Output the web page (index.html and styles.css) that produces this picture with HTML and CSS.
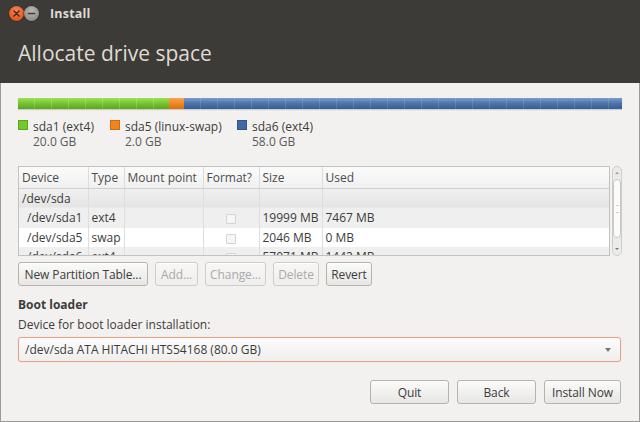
FILE: index.html
```html
<!DOCTYPE html>
<html>
<head>
<meta charset="utf-8">
<link rel="stylesheet" href="styles.css">
</head>
<body>
<div class="window">
  <div class="header">
    <div class="titlebar">
      <span class="wbtn close">
        <svg width="15" height="15" viewBox="0 0 15 15"><path d="M5 5 L10 10 M10 5 L5 10" stroke="#4a2b1c" stroke-width="1.6" stroke-linecap="round"/></svg>
      </span>
      <span class="wbtn mini">
        <svg width="15" height="15" viewBox="0 0 15 15"><path d="M4.5 7.5 H10.5" stroke="#3c3b37" stroke-width="1.6" stroke-linecap="round"/></svg>
      </span>
      <span class="wtitle">Install</span>
    </div>
    <h1 class="heading">Allocate drive space</h1>
  </div>
  <div class="content">
    <div class="pbar">
      <div class="seg green" style="flex-grow:20"></div>
      <div class="seg orange" style="flex-grow:2"></div>
      <div class="seg blue" style="flex-grow:58"></div>
    </div>
    <div class="legend">
      <div class="litem l1">
        <span class="swatch green"></span>
        <div class="ltext"><div>sda1 (ext4)</div><div>20.0 GB</div></div>
      </div>
      <div class="litem l2">
        <span class="swatch orange"></span>
        <div class="ltext"><div>sda5 (linux-swap)</div><div>2.0 GB</div></div>
      </div>
      <div class="litem l3">
        <span class="swatch blue"></span>
        <div class="ltext"><div>sda6 (ext4)</div><div>58.0 GB</div></div>
      </div>
    </div>
    <div class="tablewrap">
      <div class="tablebox">
        <table class="ptable">
          <colgroup>
            <col class="c1"><col class="c2"><col class="c3"><col class="c4"><col class="c5"><col class="c6">
          </colgroup>
          <thead>
            <tr><th>Device</th><th>Type</th><th>Mount point</th><th>Format?</th><th>Size</th><th>Used</th></tr>
          </thead>
          <tbody>
            <tr class="r-disk"><td>/dev/sda</td><td></td><td></td><td></td><td></td><td></td></tr>
            <tr class="r-gray"><td class="ind">/dev/sda1</td><td>ext4</td><td></td><td class="chk"><span class="cb"></span></td><td>19999 MB</td><td>7467 MB</td></tr>
            <tr class="r-white"><td class="ind">/dev/sda5</td><td>swap</td><td></td><td class="chk"><span class="cb"></span></td><td>2046 MB</td><td>0 MB</td></tr>
            <tr class="r-gray"><td class="ind">/dev/sda6</td><td>ext4</td><td></td><td class="chk"><span class="cb"></span></td><td>57071 MB</td><td>1442 MB</td></tr>
          </tbody>
        </table>
      </div>
      <div class="scrollbar">
        <span class="arr up"></span>
        <span class="thumb"><span class="grip"></span></span>
        <span class="arr down"></span>
      </div>
    </div>
    <div class="btnrow">
      <button class="btn b-new">New Partition Table...</button>
      <button class="btn dis b-add">Add...</button>
      <button class="btn dis b-chg">Change...</button>
      <button class="btn dis b-del">Delete</button>
      <button class="btn b-rev">Revert</button>
    </div>
    <div class="bl-title">Boot loader</div>
    <div class="bl-label">Device for boot loader installation:</div>
    <div class="combo">
      <span>/dev/sda ATA HITACHI HTS54168 (80.0 GB)</span>
      <span class="carrow"></span>
    </div>
    <div class="actions">
      <button class="btn act w79">Quit</button>
      <button class="btn act w79">Back</button>
      <button class="btn act w77">Install Now</button>
    </div>
  </div>
</div>
</body>
</html>
```
FILE: styles.css
```css
html, body {
  margin: 0;
  padding: 0;
  width: 640px;
  height: 422px;
  overflow: hidden;
  background: #f2f1f0;
}
body {
  font-family: "Open Sans", "DejaVu Sans", sans-serif;
  font-size: 12px;
  color: #3c3c3c;
}
.window {
  width: 640px;
  height: 422px;
  display: flex;
  flex-direction: column;
}
.header {
  background: #3c3b37;
  height: 83px;
  box-sizing: border-box;
}
.titlebar {
  height: 26px;
  display: flex;
  align-items: center;
  padding-left: 9px;
}
.wbtn {
  width: 15px;
  height: 15px;
  border-radius: 50%;
  display: flex;
}
.close {
  background: radial-gradient(circle at 50% 35%, #f58a5a 0%, #e5561c 70%, #c8450f 100%);
  box-shadow: 0 0 0 0.5px #2a2926;
}
.mini {
  background: radial-gradient(circle at 50% 35%, #b9b7b1 0%, #8f8d87 75%, #75736d 100%);
  box-shadow: 0 0 0 0.5px #2a2926;
}
.wtitle {
  margin-left: 11px;
  color: #dfdbd2;
  font-weight: bold;
  font-size: 12.5px;
  letter-spacing: 0.2px;
}
.heading {
  margin: 12px 0 0 18px;
  font-weight: normal;
  font-size: 21px;
  color: #dfdbd2;
  line-height: 30px;
  letter-spacing: 0px;
}
.content {
  flex: 1;
  border: 1px solid #9c9a96;
  border-top: none;
  padding: 15px 17px 0 17px;
  display: flex;
  flex-direction: column;
}
.pbar {
  height: 11px;
  display: flex;
  box-shadow: 0 1px 1px rgba(0,0,0,0.15);
}
.seg {
  height: 11px;
}
.seg.green {
  background:
    repeating-linear-gradient(90deg, transparent 0 16px, rgba(255,255,255,0.18) 16px 17px),
    linear-gradient(#9ee05a 0%, #78c832 45%, #5ea320 100%);
}
.seg.orange {
  background: linear-gradient(#f9a352 0%, #ef8a26 45%, #d56f10 100%);
}
.seg.blue {
  background:
    repeating-linear-gradient(90deg, transparent 0 16px, rgba(255,255,255,0.12) 16px 17px),
    linear-gradient(#7a9ccc 0%, #4f77ad 45%, #365c92 100%);
}
.legend {
  display: flex;
  margin-top: 10px;
  height: 36px;
}
.litem {
  display: flex;
  align-items: flex-start;
}
.l1 { width: 92px; }
.l2 { width: 127px; }
.swatch {
  width: 10px;
  height: 10px;
  margin-top: 1px;
  margin-right: 5px;
  box-sizing: border-box;
}
.swatch.green { background: #73c82c; border: 1px solid #5aa61c; }
.swatch.orange { background: #f0841e; border: 1px solid #d06a0c; }
.swatch.blue { background: #3f6aa6; border: 1px solid #2f568c; }
.ltext {
  line-height: 15px;
  margin-top: 0;
}
.ltext div:first-child { color: #3c3c3c; }
.ltext div:last-child { color: #5a5a5a; }
.tablewrap {
  margin-top: 11px;
  display: flex;
  height: 90px;
}
.tablebox {
  width: 592px;
  height: 90px;
  box-sizing: border-box;
  border: 1px solid #c4c2be;
  overflow: hidden;
  background: #ffffff;
}
.ptable {
  border-collapse: collapse;
  table-layout: fixed;
  width: 590px;
}
.c1 { width: 69px; }
.c2 { width: 36px; }
.c3 { width: 79px; }
.c4 { width: 56px; }
.c5 { width: 63px; }
.c6 { width: 287px; }
.ptable th {
  height: 21px;
  padding: 0 0 0 3px;
  text-align: left;
  font-weight: normal;
  color: #4c4c4c;
  background: linear-gradient(#fbfbfb, #f0f0f0);
  border-right: 1px solid #dcdcdc;
  border-bottom: 1px solid #cfcfcf;
  white-space: nowrap;
  box-sizing: border-box;
}
.ptable td {
  height: 19.5px;
  padding: 0 0 0 3px;
  border-right: 1px solid #dedede;
  white-space: nowrap;
  overflow: hidden;
  color: #3c3c3c;
  line-height: 19px;
}
.ptable th:last-child, .ptable td:last-child { border-right: none; }
.r-disk td { background: linear-gradient(#f0f0f0, #e4e4e4); }
.r-gray td { background: #efefef; }
.r-white td { background: #ffffff; }
td.ind { padding-left: 8px; }
td.chk { text-align: center; padding-left: 0; }
.cb {
  display: inline-block;
  width: 8px;
  height: 8px;
  border: 1px solid #d4d4d4;
  border-radius: 1px;
  background: #f6f6f6;
  vertical-align: middle;
}
.scrollbar {
  margin-left: 2px;
  width: 10px;
  height: 90px;
  box-sizing: border-box;
  border: 1px solid #cfcdc9;
  border-radius: 5px;
  background: #ebebeb;
  display: flex;
  flex-direction: column;
  align-items: center;
}
.arr {
  width: 0;
  height: 0;
  border-left: 2px solid transparent;
  border-right: 2px solid transparent;
  margin: 5px 0;
}
.arr.up { border-bottom: 2px solid #9a9a9a; }
.arr.down { border-top: 2px solid #777; margin-top: 4px; }
.thumb {
  flex: 1;
  width: 8px;
  box-sizing: border-box;
  border: 1px solid #c9c7c3;
  border-radius: 4px;
  background: #fbfbfb;
  display: flex;
  align-items: center;
  justify-content: center;
  margin-bottom: 6px;
}
.grip {
  width: 3px;
  height: 6px;
  border-top: 1px solid #d0d0d0;
  border-bottom: 1px solid #d0d0d0;
}
.btnrow {
  display: flex;
  gap: 7px;
  margin-top: 6px;
  height: 24px;
}
.btn {
  font-family: "Open Sans", "DejaVu Sans", sans-serif;
  font-size: 12px;
  color: #3c3c3c;
  height: 24px;
  padding: 0;
  border: 1px solid #b6b3ae;
  border-radius: 3px;
  background: linear-gradient(#fbfbfa, #e7e6e4);
  box-shadow: 0 1px 0 rgba(255,255,255,0.8) inset;
  white-space: nowrap;
  letter-spacing: -0.1px;
}
.b-new { width: 130px; }
.b-add { width: 43px; }
.b-chg { width: 61px; }
.b-del { width: 46px; }
.b-rev { width: 46px; }
.btn.dis {
  color: #a9a9a9;
  border-color: #cfcdca;
  background: linear-gradient(#f7f7f6, #efeeed);
}
.bl-title {
  margin-top: 10px;
  font-weight: bold;
  line-height: 17px;
  color: #3c3c3c;
}
.bl-label {
  margin-top: 3px;
  line-height: 17px;
}
.combo {
  margin-top: 4px;
  margin-right: 1px;
  height: 25px;
  box-sizing: border-box;
  border: 1px solid #e8a185;
  border-radius: 3px;
  background: linear-gradient(#fcfcfc, #efeeed);
  box-shadow: 0 0 1px #f2c2ae;
  display: flex;
  align-items: center;
  justify-content: space-between;
  padding: 0 9px 0 6px;
}
.carrow {
  width: 0;
  height: 0;
  border-left: 3px solid transparent;
  border-right: 3px solid transparent;
  border-top: 4px solid #7a7a7a;
}
.actions {
  display: flex;
  justify-content: flex-end;
  gap: 8px;
  margin-top: 18px;
  margin-right: 1px;
}
.btn.act { height: 24px; }
.w79 { width: 79px; }
.w77 { width: 77px; }
```
